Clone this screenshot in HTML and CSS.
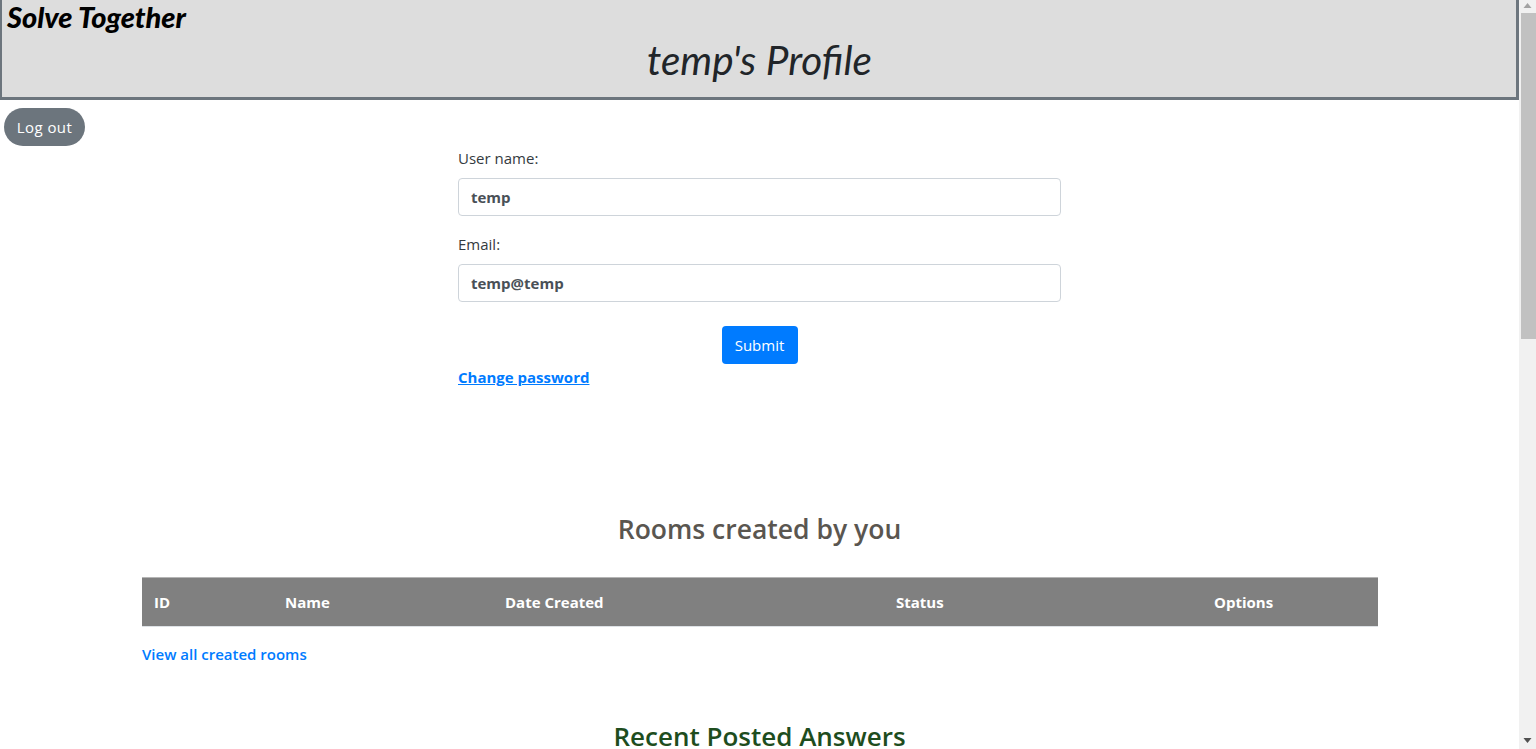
FILE: index.html
```html
<!DOCTYPE html>
<html lang="en">
<head>
<meta charset="utf-8">
<title>temp's Profile</title>
<link rel="stylesheet" href="styles.css">
</head>
<body>
<div class="window">
  <div class="page">
    <header class="banner">
      <div class="brand">Solve Together</div>
      <h1 class="title">temp's Profile</h1>
    </header>
    <div class="logout-row"><a class="btn btn-logout" href="#">Log out</a></div>
    <form class="profile">
      <label class="label" for="u">User name:</label>
      <input class="input" id="u" value="temp">
      <label class="label" for="e">Email:</label>
      <input class="input" id="e" value="temp@temp">
      <div class="submit-row"><button class="btn btn-submit" type="button">Submit</button></div>
      <a class="change" href="#">Change password</a>
    </form>
    <h2 class="section-title rooms">Rooms created by you</h2>
    <section class="table-wrap">
      <div class="thead">
        <span class="col-id">ID</span>
        <span class="col-name">Name</span>
        <span class="col-date">Date Created</span>
        <span class="col-status">Status</span>
        <span class="col-options">Options</span>
      </div>
      <a class="view-all" href="#">View all created rooms</a>
    </section>
    <h2 class="section-title answers">Recent Posted Answers</h2>
  </div>
  <div class="scrollbar">
    <svg class="arrow" width="17" height="13" viewBox="0 0 17 13"><path d="M8.5 3 L12.5 8 H4.5 Z" fill="#a3a3a3"/></svg>
    <div class="thumb"></div>
    <div class="track"></div>
    <svg class="arrow" width="17" height="17" viewBox="0 0 17 17"><path d="M4.5 6 H12.5 L8.5 11 Z" fill="#505050"/></svg>
  </div>
</div>
</body>
</html>
```
FILE: styles.css
```css
* { box-sizing: border-box; }
html, body { margin: 0; height: 749px; overflow: hidden; }
body { background: #fff; color: #343a40; font-family: "Open Sans", "Noto Sans", sans-serif; font-size: 15px; line-height: 24px; }
.window { display: flex; height: 749px; overflow: hidden; }
.page { width: 1519px; flex: none; overflow: hidden; }
.banner { height: 100px; background: #ddd; border: 3px solid #6c757d; border-top: 0; border-left-width: 2px; padding-left: 5px; }
.brand { font-family: "Lato", sans-serif; font-style: italic; font-weight: 900; font-size: 29px; line-height: 34px; color: #000; }
.title { margin: 2px 0 0; text-align: center; font-family: "Lato", sans-serif; font-style: italic; font-weight: 400; font-size: 40.5px; line-height: 48px; color: #212529; transform: translateX(-2px); }
.logout-row { padding: 8px 0 0 4px; height: 46px; }
.btn { display: inline-block; color: #fff; font-family: inherit; font-size: 15px; line-height: 24px; border: 1px solid transparent; padding: 6px 12px; text-decoration: none; }
.btn-logout { background: #6c757d; border-radius: 19px; width: 81px; text-align: center; padding: 6px 0; letter-spacing: 0.45px; }
.profile { width: 603px; margin: 0 0 0 458px; display: flex; flex-direction: column; }
.label { margin-bottom: 8px; height: 24px; }
.input { height: 38px; margin-bottom: 16px; padding: 6px 12px; border: 1px solid #ced4da; border-radius: 4px; font-family: inherit; font-size: 15px; font-weight: 700; color: #495057; background: #fff; outline: 0; }
.submit-row { display: flex; justify-content: center; margin-top: 8px; }
.btn-submit { background: #007bff; border-radius: 4px; width: 76px; height: 38px; padding: 0; }
.change { font-weight: 700; color: #007bff; text-decoration: underline; align-self: flex-start; margin-top: 1px; }
.section-title { margin: 0; text-align: center; font-size: 26.5px; font-weight: 600; line-height: 34px; }
.rooms { color: #5a5650; margin-top: 123px; }
.answers { color: #1e4d1e; margin-top: 53px; font-size: 26px; }
.table-wrap { width: 1236px; margin: 31px 0 0 142px; }
.thead { display: flex; height: 50px; align-items: center; background: #808080; border-top: 1px solid #b5b5b5; border-bottom: 1px solid #dee2e6; color: #fff; font-weight: 700; }
.thead span { flex: none; padding-left: 12px; }
.col-id { width: 131px; }
.col-name { width: 220px; }
.col-date { width: 391px; }
.col-status { width: 318px; }
.col-options { width: 176px; }
.view-all { display: block; margin-top: 15px; color: #007bff; text-decoration: none; font-weight: 600; }
.scrollbar { width: 17px; flex: none; height: 749px; background: #f1f1f1; display: flex; flex-direction: column; }
.arrow { display: block; flex: none; }
.thumb { height: 326px; width: 15px; margin-left: 2px; background: #c1c1c1; flex: none; }
.track { flex: 1; }
```
